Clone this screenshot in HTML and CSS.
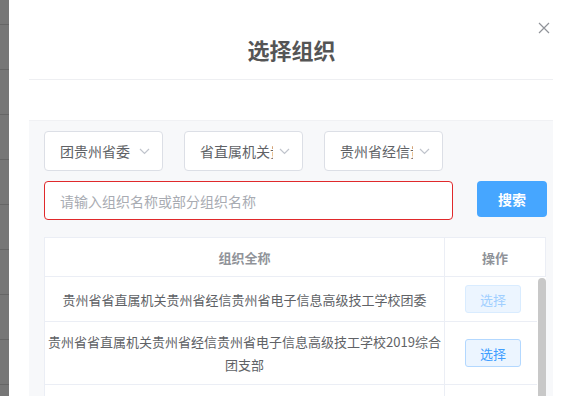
FILE: index.html
```html
<!DOCTYPE html>
<html lang="zh-CN">
<head>
  <meta charset="UTF-8" />
  <meta name="viewport" content="width=device-width, initial-scale=1" />
  <title>选择组织</title>
  <link rel="stylesheet" href="styles.css">
</head>
<body>
  <div class="backdrop-strip"></div>

  <div class="dialog">
    <button class="close-btn" aria-label="关闭">
      <svg width="12" height="12" viewBox="0 0 12 12">
        <path d="M1 1 L11 11 M11 1 L1 11" stroke="#909399" stroke-width="1.2" fill="none" />
      </svg>
    </button>

    <div class="dialog-header">
      <h2>选择组织</h2>
    </div>

    <div class="dialog-body">
      <div class="panel">
        <div class="select-row">
          <div class="select">
            <span class="select-text">团贵州省委</span>
            <svg class="chevron" width="11" height="7" viewBox="0 0 11 7"><path d="M1 1 L5.5 5.5 L10 1" stroke="#c0c4cc" stroke-width="1.2" fill="none" /></svg>
          </div>
          <div class="select">
            <span class="select-text">省直属机关贵州省</span>
            <svg class="chevron" width="11" height="7" viewBox="0 0 11 7"><path d="M1 1 L5.5 5.5 L10 1" stroke="#c0c4cc" stroke-width="1.2" fill="none" /></svg>
          </div>
          <div class="select">
            <span class="select-text">贵州省经信贵州省</span>
            <svg class="chevron" width="11" height="7" viewBox="0 0 11 7"><path d="M1 1 L5.5 5.5 L10 1" stroke="#c0c4cc" stroke-width="1.2" fill="none" /></svg>
          </div>
        </div>

        <div class="search-row">
          <input class="search-input" type="text" placeholder="请输入组织名称或部分组织名称" />
          <button class="search-btn">搜索</button>
        </div>

        <div class="table">
          <div class="table-head">
            <div class="th col-name">组织全称</div>
            <div class="th col-op">操作</div>
          </div>
          <div class="table-wrap">
            <div class="table-body">
              <div class="tr">
                <div class="td col-name">贵州省省直属机关贵州省经信贵州省电子信息高级技工学校团委</div>
                <div class="td col-op"><button class="pick-btn is-disabled">选择</button></div>
              </div>
              <div class="tr">
                <div class="td col-name">贵州省省直属机关贵州省经信贵州省电子信息高级技工学校2019综合团支部</div>
                <div class="td col-op"><button class="pick-btn">选择</button></div>
              </div>
              <div class="tr">
                <div class="td col-name">贵州省省直属机关贵州省经信贵州省电子信息高级技工学校2020综合团支部</div>
                <div class="td col-op"><button class="pick-btn">选择</button></div>
              </div>
            </div>
            <div class="scrollbar">
              <div class="thumb"></div>
            </div>
          </div>
        </div>
      </div>
    </div>
  </div>
</body>
</html>
```

FILE: styles.css
```css
* {
  box-sizing: border-box;
}

html, body {
  height: 100%;
}

body {
  margin: 0;
  display: flex;
  overflow: hidden;
  font-family: "Noto Sans CJK SC", "Noto Sans", sans-serif;
  color: #606266;
  background: #fff;
}

.backdrop-strip {
  width: 9px;
  flex-shrink: 0;
  background: repeating-linear-gradient(to bottom,
    #777 0, #777 24px, #666 24px, #666 25px, #777 25px, #777 45px);
  box-shadow: 1px 0 2px rgba(0, 0, 0, 0.15);
}

.dialog {
  flex: 1;
  position: relative;
  background: #fff;
}

.close-btn {
  position: absolute;
  top: 22px;
  right: 21px;
  width: 12px;
  height: 12px;
  padding: 0;
  border: none;
  background: none;
  display: flex;
  cursor: pointer;
}

.dialog-header {
  margin: 0 18px 0 20px;
  height: 80px;
  padding-top: 34px;
  border-bottom: 1px solid #eeeff2;
}

.dialog-header h2 {
  margin: 0;
  text-align: center;
  font-size: 22px;
  line-height: 30px;
  font-weight: 700;
  color: #555;
  padding-left: 1px;
}

.dialog-body {
  margin: 40px 18px 0 20px;
}

.panel {
  background: #f7f8fa;
  border-top: 1px solid #f0f1f4;
  padding: 10px 6px 0 15px;
  height: 400px;
}

.select-row {
  display: flex;
  gap: 21px;
}

.select {
  width: 119px;
  height: 40px;
  display: flex;
  align-items: center;
  padding: 0 12px 0 15px;
  background: #fff;
  border: 1px solid #dcdfe6;
  border-radius: 4px;
}

.select-text {
  flex: 1;
  overflow: hidden;
  white-space: nowrap;
  font-size: 14px;
  color: #606266;
  margin-right: 6px;
}

.chevron {
  flex-shrink: 0;
}

.search-row {
  display: flex;
  gap: 24px;
  margin-top: 10px;
  align-items: flex-start;
}

.search-input {
  width: 409px;
  height: 39px;
  padding: 0 15px;
  border: 1px solid #e0292b;
  border-radius: 4px;
  font-family: inherit;
  font-size: 14px;
  color: #606266;
  background: #fff;
  outline: none;
}

.search-input::placeholder {
  color: #a8abb2;
}

.search-btn {
  width: 70px;
  height: 36px;
  border: none;
  border-radius: 4px;
  background: #46a6ff;
  color: #fff;
  font-family: inherit;
  font-size: 14px;
  font-weight: 700;
  cursor: pointer;
}

.table {
  margin-top: 17px;
  width: 502px;
  background: #fff;
  border-left: 1px solid #ebeef5;
  font-size: 13px;
}

.table-head {
  display: flex;
  height: 40px;
  border-top: 1px solid #ebeef5;
  border-bottom: 1px solid #ebeef5;
  border-right: 1px solid #ebeef5;
}

.th {
  display: flex;
  align-items: center;
  justify-content: center;
  font-weight: 700;
  color: #909399;
}

.col-name {
  width: 400px;
  border-right: 1px solid #ebeef5;
}

.table-head .col-op {
  flex: 1;
}

.table-wrap {
  display: flex;
}

.table-body {
  flex: 1;
}

.tr {
  display: flex;
  border-bottom: 1px solid #ebeef5;
}

.td {
  padding: 8px 2px;
  line-height: 23px;
  text-align: center;
  color: #606266;
  display: flex;
  align-items: center;
  justify-content: center;
}

.td.col-op {
  flex: 1;
  padding-left: 6px;
}

.pick-btn {
  width: 56px;
  height: 28px;
  padding: 0;
  border: 1px solid #b3d8ff;
  border-radius: 3px;
  background: #ecf5ff;
  color: #409eff;
  font-family: inherit;
  font-size: 13px;
  cursor: pointer;
}

.pick-btn.is-disabled {
  border-color: #d9ecff;
  color: #a0cfff;
  cursor: not-allowed;
}

.scrollbar {
  width: 9px;
  padding: 1px 0 0 1px;
  background: #fff;
}

.thumb {
  height: 300px;
  background: #c8c8c8;
  border-radius: 4px 4px 0 0;
}
```
